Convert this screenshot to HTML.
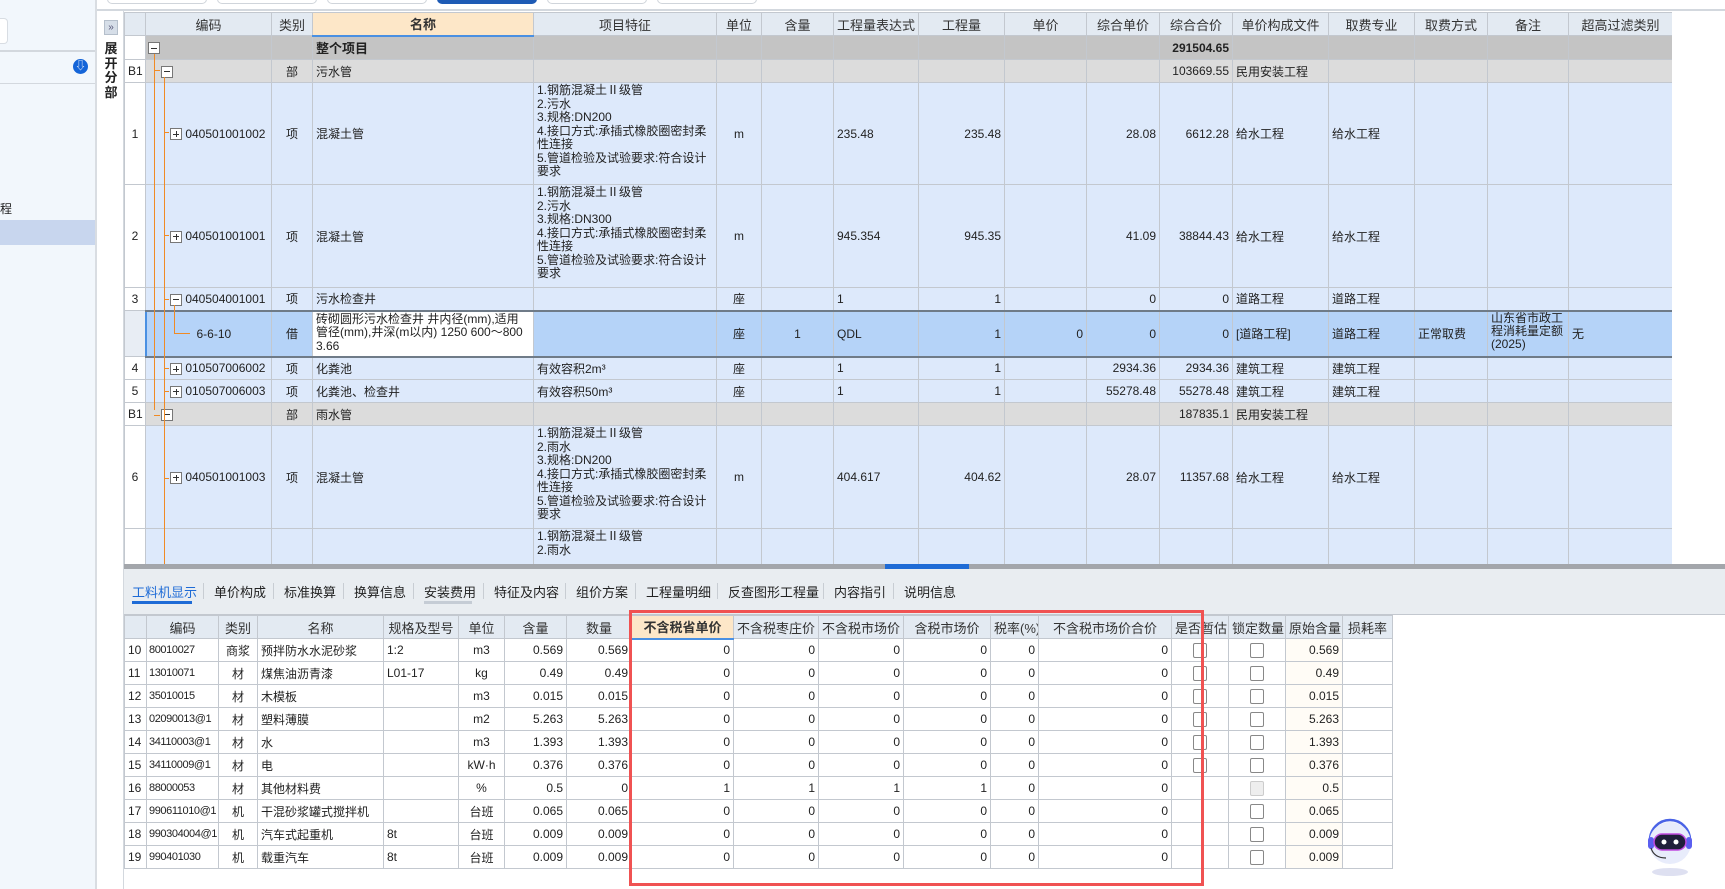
<!DOCTYPE html>
<html><head><meta charset="utf-8">
<style>
*{box-sizing:border-box;margin:0;padding:0}
body{width:1725px;height:889px;overflow:hidden;background:#fff;font-family:"Liberation Sans","Noto Sans CJK SC",sans-serif;font-size:12px;color:#222;position:relative}
.abs{position:absolute}
table{border-collapse:collapse;table-layout:fixed}
td,th{border:1px solid #c3c8cf;padding:0 3px;white-space:nowrap;overflow:hidden;font-weight:normal;vertical-align:middle}
th{background:#e3eaf2;font-size:13px;color:#333}
.r{text-align:right}.c{text-align:center}
#up tr.g0 td{background:#c4c4c4}
#up tr.g1 td{background:#dcdcdc}
#up tr.it td{background:#dde9fb}
#up tr td.rn{background:#fff;text-align:center}
#up tr.g0 td.rn,#up tr.g1 td.rn{background:#fff}
.ml{white-space:normal;line-height:13.5px;vertical-align:top;padding-top:1px}
.bx{display:inline-block;width:12px;height:12px;border:1px solid #777;background:#fff;position:relative;vertical-align:middle}
.bx:before{content:"";position:absolute;left:2px;right:2px;top:4.5px;height:1px;background:#333}
.bx.p:after{content:"";position:absolute;top:2px;bottom:2px;left:4.5px;width:1px;background:#333}
#lo td{height:23px;background:#fff}
#lo td.oc{background:#fffcf6}
#lo td.cd{font-size:11px;letter-spacing:-0.4px;padding:0 2px}
.cb{display:inline-block;width:14px;height:15px;border:1px solid #888;border-radius:2px;background:#fff;vertical-align:middle}
.tab{position:absolute;top:582px;font-size:13px;color:#222}
.sep{position:absolute;top:583px;width:1px;height:16px;background:#c8cdd3}
</style></head><body>

<div class="abs" style="left:0;top:0;width:97px;height:889px;background:#f2f7fc;border-right:2px solid #d9dde2"></div>
<div class="abs" style="left:0;top:18px;width:8px;height:26px;background:#fff;border:1px solid #d8dde3;border-left:none;border-radius:0 4px 4px 0"></div>
<div class="abs" style="left:0;top:50px;width:95px;height:2px;background:#d3d8de"></div>
<div class="abs" style="left:0;top:83px;width:95px;height:1px;background:#d3d8de"></div>
<div class="abs" style="left:73px;top:59px;width:15px;height:15px;border-radius:50%;background:#1565d8;color:#fff;font-size:11px;line-height:15px;text-align:center">⇩</div>
<div class="abs" style="left:0;top:200px;font-size:12px">程</div>
<div class="abs" style="left:0;top:220px;width:95px;height:25px;background:#c8d6ee"></div>
<div class="abs" style="left:97px;top:10px;width:27px;height:879px;background:#fff;border-right:1px solid #d3d8de"></div>
<div class="abs" style="left:104px;top:20px;width:14px;height:15px;background:#d6dee8;border:1px solid #b5bfcb;font-size:10px;line-height:13px;text-align:center;color:#557">»</div>
<div class="abs" style="left:103px;top:42px;width:16px;font-size:13px;font-weight:bold;line-height:14.5px;text-align:center">展<br>开<br>分<br>部</div>

<div class="abs" style="left:97px;top:0;width:1628px;height:11px;background:#fff;border-bottom:2px solid #d3d8de"></div>
<div class="abs" style="left:107px;top:-6px;width:100px;height:10px;border:1px solid #d0d5db;border-radius:5px;background:#fff"></div>
<div class="abs" style="left:217px;top:-6px;width:100px;height:10px;border:1px solid #d0d5db;border-radius:5px;background:#fff"></div>
<div class="abs" style="left:327px;top:-6px;width:100px;height:10px;border:1px solid #d0d5db;border-radius:5px;background:#fff"></div>
<div class="abs" style="left:437px;top:-6px;width:100px;height:10px;border-radius:5px;background:#1e5bb5"></div>
<div class="abs" style="left:547px;top:-6px;width:100px;height:10px;border:1px solid #d0d5db;border-radius:5px;background:#fff"></div>
<div class="abs" style="left:657px;top:-6px;width:100px;height:10px;border:1px solid #d0d5db;border-radius:5px;background:#fff"></div>

<div class="abs" style="left:124px;top:12px;width:1548px;height:552px;overflow:hidden">
<table id="up" style="width:1548px">
<colgroup><col style="width:21px"><col style="width:126px"><col style="width:41px"><col style="width:221px"><col style="width:183px"><col style="width:45px"><col style="width:72px"><col style="width:85px"><col style="width:86px"><col style="width:82px"><col style="width:73px"><col style="width:73px"><col style="width:96px"><col style="width:86px"><col style="width:73px"><col style="width:81px"><col style="width:104px"></colgroup>
<tr style="height:23px"><th></th><th>编码</th><th>类别</th><th style="background:#fde7c8;font-weight:bold;border-bottom:2px solid #4a90e2">名称</th><th>项目特征</th><th>单位</th><th>含量</th><th>工程量表达式</th><th>工程量</th><th>单价</th><th>综合单价</th><th>综合合价</th><th>单价构成文件</th><th>取费专业</th><th>取费方式</th><th>备注</th><th>超高过滤类别</th></tr>
<tr class="g0" style="height:24px"><td class="rn"></td><td style="padding-left:2px"><span class="bx"></span></td><td></td><td style="font-weight:bold;font-size:13px">整个项目</td><td></td><td></td><td></td><td></td><td></td><td></td><td></td><td class="r" style="font-weight:bold">291504.65</td><td></td><td></td><td></td><td></td><td></td></tr>
<tr class="g1" style="height:23px"><td class="rn">B1</td><td style="padding-left:15px"><span class="bx"></span></td><td class="c">部</td><td>污水管</td><td></td><td></td><td></td><td></td><td></td><td></td><td></td><td class="r">103669.55</td><td>民用安装工程</td><td></td><td></td><td></td><td></td></tr>
<tr class="it" style="height:102px"><td class="rn">1</td><td style="padding-left:24px"><span class="bx p"></span> 040501001002</td><td class="c">项</td><td>混凝土管</td><td class="ml">1.钢筋混凝土Ⅱ级管<br>2.污水<br>3.规格:DN200<br>4.接口方式:承插式橡胶圈密封柔<br>性连接<br>5.管道检验及试验要求:符合设计<br>要求</td><td class="c">m</td><td></td><td>235.48</td><td class="r">235.48</td><td></td><td class="r">28.08</td><td class="r">6612.28</td><td>给水工程</td><td>给水工程</td><td></td><td></td><td></td></tr>
<tr class="it" style="height:103px"><td class="rn">2</td><td style="padding-left:24px"><span class="bx p"></span> 040501001001</td><td class="c">项</td><td>混凝土管</td><td class="ml">1.钢筋混凝土Ⅱ级管<br>2.污水<br>3.规格:DN300<br>4.接口方式:承插式橡胶圈密封柔<br>性连接<br>5.管道检验及试验要求:符合设计<br>要求</td><td class="c">m</td><td></td><td>945.354</td><td class="r">945.35</td><td></td><td class="r">41.09</td><td class="r">38844.43</td><td>给水工程</td><td>给水工程</td><td></td><td></td><td></td></tr>
<tr class="it" style="height:23px"><td class="rn">3</td><td style="padding-left:24px"><span class="bx"></span> 040504001001</td><td class="c">项</td><td>污水检查井</td><td></td><td class="c">座</td><td></td><td>1</td><td class="r">1</td><td></td><td class="r">0</td><td class="r">0</td><td>道路工程</td><td>道路工程</td><td></td><td></td><td></td></tr>
<tr class="it hl" style="height:46px"><td class="rn" style="background:#e8edf4!important"></td><td style="background:#b5d3f8;padding-left:50px;border-top:2px solid #6f7b88;border-bottom:2px solid #6f7b88;border-left:2px solid #4a90e2">6-6-10</td><td class="c" style="background:#b5d3f8;border-top:2px solid #6f7b88;border-bottom:2px solid #6f7b88">借</td><td class="ml" style="background:#fff;border-top:2px solid #6f7b88;border-bottom:2px solid #6f7b88;line-height:13.5px">砖砌圆形污水检查井 井内径(mm),适用管径(mm),井深(m以内) 1250 600～800 3.66</td><td style="background:#b5d3f8;border-top:2px solid #6f7b88;border-bottom:2px solid #6f7b88"></td><td class="c" style="background:#b5d3f8;border-top:2px solid #6f7b88;border-bottom:2px solid #6f7b88">座</td><td class="c" style="background:#b5d3f8;border-top:2px solid #6f7b88;border-bottom:2px solid #6f7b88">1</td><td style="background:#b5d3f8;border-top:2px solid #6f7b88;border-bottom:2px solid #6f7b88">QDL</td><td class="r" style="background:#b5d3f8;border-top:2px solid #6f7b88;border-bottom:2px solid #6f7b88">1</td><td class="r" style="background:#b5d3f8;border-top:2px solid #6f7b88;border-bottom:2px solid #6f7b88">0</td><td class="r" style="background:#b5d3f8;border-top:2px solid #6f7b88;border-bottom:2px solid #6f7b88">0</td><td class="r" style="background:#b5d3f8;border-top:2px solid #6f7b88;border-bottom:2px solid #6f7b88">0</td><td style="background:#b5d3f8;border-top:2px solid #6f7b88;border-bottom:2px solid #6f7b88">[道路工程]</td><td style="background:#b5d3f8;border-top:2px solid #6f7b88;border-bottom:2px solid #6f7b88">道路工程</td><td style="background:#b5d3f8;border-top:2px solid #6f7b88;border-bottom:2px solid #6f7b88">正常取费</td><td class="ml" style="background:#b5d3f8;border-top:2px solid #6f7b88;border-bottom:2px solid #6f7b88;padding-top:0;line-height:13px">山东省市政工程消耗量定额(2025)</td><td style="background:#b5d3f8;border-top:2px solid #6f7b88;border-bottom:2px solid #6f7b88;border-right:2px solid #6f7b88">无</td></tr>
<tr class="it" style="height:23px"><td class="rn">4</td><td style="padding-left:24px"><span class="bx p"></span> 010507006002</td><td class="c">项</td><td>化粪池</td><td>有效容积2m³</td><td class="c">座</td><td></td><td>1</td><td class="r">1</td><td></td><td class="r">2934.36</td><td class="r">2934.36</td><td>建筑工程</td><td>建筑工程</td><td></td><td></td><td></td></tr>
<tr class="it" style="height:23px"><td class="rn">5</td><td style="padding-left:24px"><span class="bx p"></span> 010507006003</td><td class="c">项</td><td>化粪池、检查井</td><td>有效容积50m³</td><td class="c">座</td><td></td><td>1</td><td class="r">1</td><td></td><td class="r">55278.48</td><td class="r">55278.48</td><td>建筑工程</td><td>建筑工程</td><td></td><td></td><td></td></tr>
<tr class="g1" style="height:23px"><td class="rn">B1</td><td style="padding-left:15px"><span class="bx"></span></td><td class="c">部</td><td>雨水管</td><td></td><td></td><td></td><td></td><td></td><td></td><td></td><td class="r">187835.1</td><td>民用安装工程</td><td></td><td></td><td></td><td></td></tr>
<tr class="it" style="height:103px"><td class="rn">6</td><td style="padding-left:24px"><span class="bx p"></span> 040501001003</td><td class="c">项</td><td>混凝土管</td><td class="ml">1.钢筋混凝土Ⅱ级管<br>2.雨水<br>3.规格:DN200<br>4.接口方式:承插式橡胶圈密封柔<br>性连接<br>5.管道检验及试验要求:符合设计<br>要求</td><td class="c">m</td><td></td><td>404.617</td><td class="r">404.62</td><td></td><td class="r">28.07</td><td class="r">11357.68</td><td>给水工程</td><td>给水工程</td><td></td><td></td><td></td></tr>
<tr class="it" style="height:60px"><td class="rn"></td><td></td><td></td><td></td><td class="ml">1.钢筋混凝土Ⅱ级管<br>2.雨水</td><td></td><td></td><td></td><td></td><td></td><td></td><td></td><td></td><td></td><td></td><td></td><td></td></tr>
</table>
</div>
<div class="abs" style="left:154px;top:54px;width:1px;height:356px;background:#f08a24"></div>
<div class="abs" style="left:154px;top:70px;width:6px;height:1px;background:#f08a24"></div>
<div class="abs" style="left:154px;top:415px;width:6px;height:1px;background:#f08a24"></div>
<div class="abs" style="left:164px;top:77px;width:1px;height:487px;background:#f08a24"></div>
<div class="abs" style="left:164px;top:132px;width:5px;height:1px;background:#f08a24"></div>
<div class="abs" style="left:164px;top:235px;width:5px;height:1px;background:#f08a24"></div>
<div class="abs" style="left:164px;top:299px;width:5px;height:1px;background:#f08a24"></div>
<div class="abs" style="left:164px;top:368px;width:5px;height:1px;background:#f08a24"></div>
<div class="abs" style="left:164px;top:391px;width:5px;height:1px;background:#f08a24"></div>
<div class="abs" style="left:164px;top:478px;width:5px;height:1px;background:#f08a24"></div>
<div class="abs" style="left:174px;top:305px;width:1px;height:29px;background:#f08a24"></div>
<div class="abs" style="left:174px;top:333px;width:16px;height:1px;background:#f08a24"></div>

<div class="abs" style="left:124px;top:564px;width:1601px;height:5px;background:#a3a6ab"></div>
<div class="abs" style="left:885px;top:564px;width:84px;height:5px;background:#1e6bd6"></div>
<div class="abs" style="left:124px;top:569px;width:1601px;height:46px;background:#e9edf1;border-bottom:1px solid #c3c8cf"></div>

<div class="tab" style="left:132px;color:#1e6bd6">工料机显示</div>
<div class="abs" style="left:132px;top:601px;width:60px;height:3px;background:#1e6bd6"></div>
<div class="sep" style="left:203px"></div>
<div class="tab" style="left:214px">单价构成</div><div class="sep" style="left:273px"></div>
<div class="tab" style="left:284px">标准换算</div><div class="sep" style="left:343px"></div>
<div class="tab" style="left:354px">换算信息</div><div class="sep" style="left:413px"></div>
<div class="tab" style="left:424px">安装费用</div>
<div class="abs" style="left:424px;top:601px;width:48px;height:3px;background:#c5ccd5"></div>
<div class="sep" style="left:483px"></div>
<div class="tab" style="left:494px">特征及内容</div><div class="sep" style="left:565px"></div>
<div class="tab" style="left:576px">组价方案</div><div class="sep" style="left:635px"></div>
<div class="tab" style="left:646px">工程量明细</div><div class="sep" style="left:717px"></div>
<div class="tab" style="left:728px">反查图形工程量</div><div class="sep" style="left:823px"></div>
<div class="tab" style="left:834px">内容指引</div><div class="sep" style="left:893px"></div>
<div class="tab" style="left:904px">说明信息</div>

<div class="abs" style="left:124px;top:615px">
<table id="lo" style="width:1268px">
<colgroup><col style="width:22px"><col style="width:72px"><col style="width:39px"><col style="width:126px"><col style="width:75px"><col style="width:46px"><col style="width:62px"><col style="width:65px"><col style="width:102px"><col style="width:85px"><col style="width:85px"><col style="width:87px"><col style="width:48px"><col style="width:133px"><col style="width:57px"><col style="width:57px"><col style="width:57px"><col style="width:50px"></colgroup>
<tr style="height:23px"><th></th><th>编码</th><th>类别</th><th>名称</th><th>规格及型号</th><th>单位</th><th>含量</th><th>数量</th><th style="background:#fde7c8;font-weight:bold;border-bottom:2px solid #4a90e2">不含税省单价</th><th>不含税枣庄价</th><th>不含税市场价</th><th>含税市场价</th><th>税率(%)</th><th>不含税市场价合价</th><th>是否暂估</th><th>锁定数量</th><th>原始含量</th><th>损耗率</th></tr>
<tr><td>10</td><td class="cd">80010027</td><td class="c">商浆</td><td>预拌防水水泥砂浆</td><td>1:2</td><td class="c">m3</td><td class="r">0.569</td><td class="r">0.569</td><td class="r">0</td><td class="r">0</td><td class="r">0</td><td class="r">0</td><td class="r">0</td><td class="r">0</td><td class="c"><span class="cb"></span></td><td class="c"><span class="cb"></span></td><td class="r oc">0.569</td><td></td></tr>
<tr><td>11</td><td class="cd">13010071</td><td class="c">材</td><td>煤焦油沥青漆</td><td>L01-17</td><td class="c">kg</td><td class="r">0.49</td><td class="r">0.49</td><td class="r">0</td><td class="r">0</td><td class="r">0</td><td class="r">0</td><td class="r">0</td><td class="r">0</td><td class="c"><span class="cb"></span></td><td class="c"><span class="cb"></span></td><td class="r oc">0.49</td><td></td></tr>
<tr><td>12</td><td class="cd">35010015</td><td class="c">材</td><td>木模板</td><td></td><td class="c">m3</td><td class="r">0.015</td><td class="r">0.015</td><td class="r">0</td><td class="r">0</td><td class="r">0</td><td class="r">0</td><td class="r">0</td><td class="r">0</td><td class="c"><span class="cb"></span></td><td class="c"><span class="cb"></span></td><td class="r oc">0.015</td><td></td></tr>
<tr><td>13</td><td class="cd">02090013@1</td><td class="c">材</td><td>塑料薄膜</td><td></td><td class="c">m2</td><td class="r">5.263</td><td class="r">5.263</td><td class="r">0</td><td class="r">0</td><td class="r">0</td><td class="r">0</td><td class="r">0</td><td class="r">0</td><td class="c"><span class="cb"></span></td><td class="c"><span class="cb"></span></td><td class="r oc">5.263</td><td></td></tr>
<tr><td>14</td><td class="cd">34110003@1</td><td class="c">材</td><td>水</td><td></td><td class="c">m3</td><td class="r">1.393</td><td class="r">1.393</td><td class="r">0</td><td class="r">0</td><td class="r">0</td><td class="r">0</td><td class="r">0</td><td class="r">0</td><td class="c"><span class="cb"></span></td><td class="c"><span class="cb"></span></td><td class="r oc">1.393</td><td></td></tr>
<tr><td>15</td><td class="cd">34110009@1</td><td class="c">材</td><td>电</td><td></td><td class="c">kW·h</td><td class="r">0.376</td><td class="r">0.376</td><td class="r">0</td><td class="r">0</td><td class="r">0</td><td class="r">0</td><td class="r">0</td><td class="r">0</td><td class="c"><span class="cb"></span></td><td class="c"><span class="cb"></span></td><td class="r oc">0.376</td><td></td></tr>
<tr><td>16</td><td class="cd">88000053</td><td class="c">材</td><td>其他材料费</td><td></td><td class="c">%</td><td class="r">0.5</td><td class="r">0</td><td class="r">1</td><td class="r">1</td><td class="r">1</td><td class="r">1</td><td class="r">0</td><td class="r">0</td><td></td><td class="c"><span class="cb" style="background:#eee;border-color:#ccc"></span></td><td class="r oc">0.5</td><td></td></tr>
<tr><td>17</td><td class="cd">990611010@1</td><td class="c">机</td><td>干混砂浆罐式搅拌机</td><td></td><td class="c">台班</td><td class="r">0.065</td><td class="r">0.065</td><td class="r">0</td><td class="r">0</td><td class="r">0</td><td class="r">0</td><td class="r">0</td><td class="r">0</td><td></td><td class="c"><span class="cb"></span></td><td class="r oc">0.065</td><td></td></tr>
<tr><td>18</td><td class="cd">990304004@1</td><td class="c">机</td><td>汽车式起重机</td><td>8t</td><td class="c">台班</td><td class="r">0.009</td><td class="r">0.009</td><td class="r">0</td><td class="r">0</td><td class="r">0</td><td class="r">0</td><td class="r">0</td><td class="r">0</td><td></td><td class="c"><span class="cb"></span></td><td class="r oc">0.009</td><td></td></tr>
<tr><td>19</td><td class="cd">990401030</td><td class="c">机</td><td>载重汽车</td><td>8t</td><td class="c">台班</td><td class="r">0.009</td><td class="r">0.009</td><td class="r">0</td><td class="r">0</td><td class="r">0</td><td class="r">0</td><td class="r">0</td><td class="r">0</td><td></td><td class="c"><span class="cb"></span></td><td class="r oc">0.009</td><td></td></tr>
</table>
</div>

<div class="abs" style="left:629px;top:610px;width:575px;height:276px;border:3px solid #f05252"></div>

<svg class="abs" style="left:1640px;top:810px" width="60" height="70" viewBox="0 0 60 70">
<ellipse cx="30" cy="62" rx="18" ry="4" fill="#c8cbe8" opacity=".6"/>
<path d="M10 30 A20 20 0 0 1 50 30" fill="none" stroke="#4a63e6" stroke-width="2.5"/>
<circle cx="30" cy="33" r="21" fill="#e8ecfb"/>
<rect x="8" y="27" width="6" height="12" rx="3" fill="#5b5ff0"/>
<rect x="46" y="27" width="6" height="12" rx="3" fill="#5b5ff0"/>
<rect x="14" y="24" width="32" height="16" rx="8" fill="#1f1f3a" stroke="#c04be0" stroke-width="1.5"/>
<circle cx="24" cy="32" r="2.5" fill="#fff"/><circle cx="36" cy="32" r="2.5" fill="#fff"/>
<path d="M11 38 Q14 48 26 48" fill="none" stroke="#333" stroke-width="1.2"/>
</svg>
</body></html>
